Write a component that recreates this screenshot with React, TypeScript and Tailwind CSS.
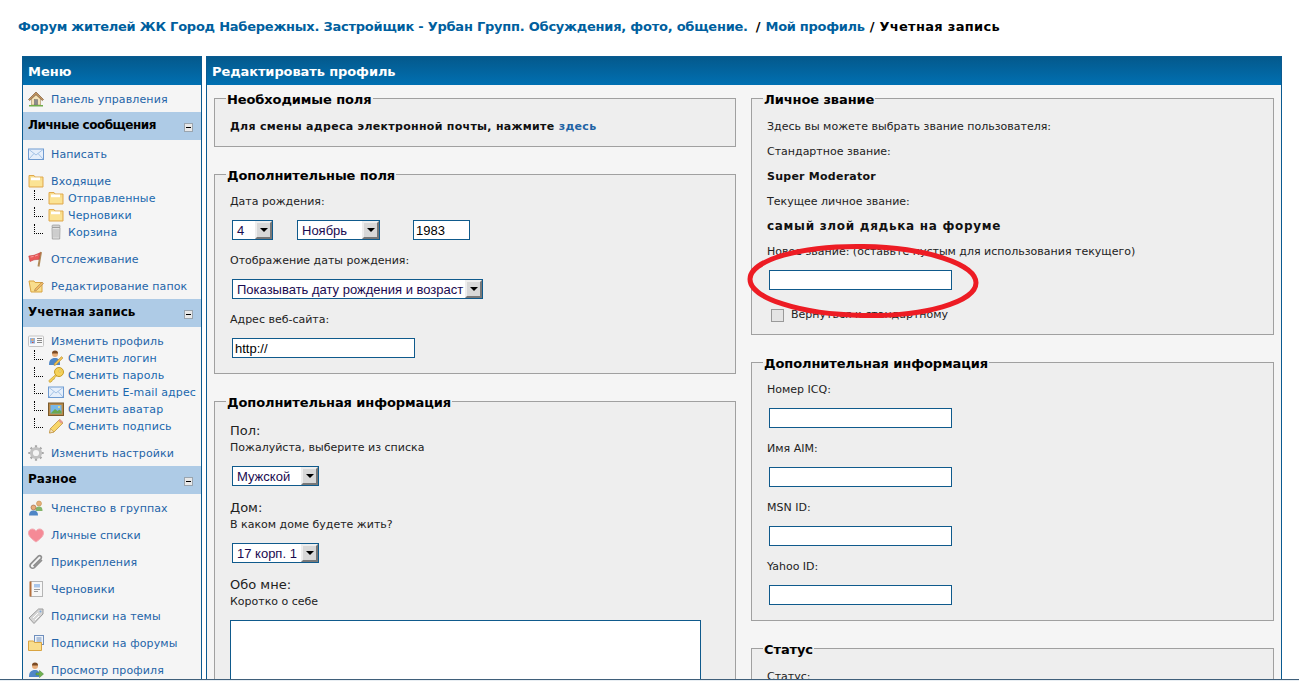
import type { ReactNode } from "react";

type IconName =
  | "home" | "mail" | "folder" | "trash" | "flag" | "folderEdit" | "card" | "userEdit" | "key"
  | "picture" | "pencil" | "gear" | "group" | "heart" | "clip" | "notebook" | "tag" | "folderDocs" | "userGo";

function Icon({ name }: { name: IconName }) {
  const body: Record<IconName, ReactNode> = {
    home: (
      <>
        <path d="M3.5 7.5 8 3.8l4.500 3.700V14h-9z" fill="#f3e2b8" stroke="#a58a5c" strokeWidth=".6" />
        <path d="M.5 8.500 8 1l7.500 7.500-1.200 1L8 3.500 1.700 9.500z" fill="#c49560" stroke="#7b5a3a" strokeWidth=".7" />
        <rect x="6.300" y="8.500" width="3.400" height="5.500" fill="#8c8c8c" stroke="#666" strokeWidth=".4" />
        <path d="M1 14h14v1.500H1z" fill="#6fae4a" />
      </>
    ),
    mail: (
      <>
        <rect x=".5" y="3" width="15" height="10.500" fill="#e6effb" stroke="#6f9bd1" />
        <path d="m1 3.500 7 5.500 7-5.500M1 13l5-5.500M15 13l-5-5.500" fill="none" stroke="#a3c2e6" />
      </>
    ),
    folder: (
      <>
        <path d="M1 2.500h5l1 1.500h8v10H1z" fill="#f9dd8c" stroke="#e0a94e" />
        <path d="M3 4.500h9v3H3z" fill="#fff" />
        <path d="M2 7.500h12V13H2z" fill="#fbe394" />
      </>
    ),
    trash: (
      <>
        <rect x="4" y="1" width="8" height="2.500" rx="1" fill="#d2d2d2" stroke="#8c8c8c" strokeWidth=".6" />
        <path d="M4 3.500h8l-.3 11.500H4.300z" fill="#e2e2e2" stroke="#8c8c8c" strokeWidth=".7" />
        <path d="M6 5v8.500M8 5v8.500M10 5v8.500" stroke="#a6a6a6" strokeWidth=".7" />
      </>
    ),
    flag: (
      <>
        <path d="M13 1 10.500 15.500" stroke="#b08a58" strokeWidth="2" />
        <path d="M.8 5 6 4.300l6.200-2.500-1.200 6.500-5 .5L2 10.500z" fill="#ea5a5a" stroke="#c43a3a" strokeWidth=".6" />
        <path d="m2.500 6 3-.5M7 5l3-1" stroke="#f9b0b0" strokeWidth=".8" />
      </>
    ),
    folderEdit: (
      <>
        <path d="M1 3h5l1 1.500h7V14H3z" fill="#f9dd8c" stroke="#d9a441" />
        <path d="m7 11 7-7 1.500 1.500-7 7-2 .5z" fill="#f0b860" stroke="#a9814f" strokeWidth=".6" />
      </>
    ),
    card: (
      <>
        <rect x=".5" y="3" width="15" height="10.500" rx="1" fill="#f9f9f9" stroke="#c4c4c4" />
        <rect x="2" y="5" width="5" height="5.500" fill="#8db4e2" />
        <circle cx="4.500" cy="6.800" r="1.300" fill="#e7a76c" />
        <path d="M4 9.500h1.500" stroke="#d0453a" />
        <path d="M9 5.500h5M9 7.500h5M9 9.500h5" stroke="#8a8a8a" />
      </>
    ),
    userEdit: (
      <>
        <circle cx="7" cy="4" r="3" fill="#e7ad7a" />
        <path d="M4 3.500a3 3 0 0 1 6 0z" fill="#7a4a24" />
        <path d="M1 15c0-5 2-7 6-7s5 2 5 7z" fill="#4f86c6" />
        <path d="m6.500 13.500 7-7 1.500 1.500-7 7-2 .5z" fill="#f0c050" stroke="#b08a30" strokeWidth=".5" />
      </>
    ),
    key: (
      <>
        <path d="M8.300 7 .8 13.700l1 1.800 2.200-1.300.6-1.600 1.600-.4.4-1.600 3.500-2.800z" fill="#f5d25a" stroke="#c79a28" strokeWidth=".7" />
        <circle cx="11" cy="5" r="4.500" fill="#f5d25a" stroke="#c79a28" />
        <circle cx="12" cy="4" r="1.100" fill="#fff6c8" stroke="#c79a28" strokeWidth=".5" />
      </>
    ),
    picture: (
      <>
        <rect x=".5" y="2" width="15" height="12.500" fill="#b98a4a" stroke="#7a5a2c" />
        <rect x="2.500" y="4" width="11" height="8.500" fill="#78b7e8" />
        <path d="M2.500 12.500 7 8l2.500 2 2-1.500 2 2v2z" fill="#6aa84f" />
        <circle cx="11" cy="6" r="1" fill="#f6e27a" />
      </>
    ),
    pencil: (
      <>
        <path d="m1.500 15 1-4.500L11.500 1.500l3.500 3.500-9 9z" fill="#f8d66a" stroke="#b8862e" strokeWidth=".7" />
        <path d="m1.500 15 1-4.500 3.500 3.500z" fill="#f2dfb9" stroke="#b8862e" strokeWidth=".5" />
        <path d="m10.300 2.700 3 3 1.700-1.700-3-3z" fill="#e59a8e" />
      </>
    ),
    gear: (
      <>
        <path d="M8 .3v3.400M8 12.300v3.400M.3 8h3.400M12.300 8h3.400M2.600 2.600l2.400 2.400M11 11l2.400 2.400M2.600 13.400 5 11M11 5l2.400-2.400" stroke="#a8a8a8" strokeWidth="2.200" />
        <circle cx="8" cy="8" r="4.600" fill="none" stroke="#c2c2c2" strokeWidth="3" />
      </>
    ),
    group: (
      <>
        <circle cx="11" cy="3.500" r="2.500" fill="#e7ad7a" stroke="#b88a3c" strokeWidth=".5" />
        <path d="M7.500 11c0-3 1-4.500 3.500-4.500s3.500 1.500 3.500 4.500z" fill="#84b56a" />
        <circle cx="5.500" cy="7.500" r="2.500" fill="#e7ad7a" stroke="#8a4a24" strokeWidth=".5" />
        <path d="M1 15.500c0-3.500 1.500-5 4.500-5s4.500 1.500 4.500 5z" fill="#4f86c6" />
      </>
    ),
    heart: <path d="M8 15C3 11.500.5 9 .5 5.800.5 3.500 2.300 2 4.300 2 5.800 2 7.200 2.800 8 4.200 8.800 2.800 10.200 2 11.700 2c2 0 3.800 1.500 3.800 3.800C15.500 9 13 11.500 8 15z" fill="#f58a96" stroke="#f2aab2" />,
    clip: (
      <path d="m14 5-7.500 7.500a2.600 2.600 0 0 1-3.700-3.700l7.800-7.800a1.800 1.800 0 0 1 2.500 2.500L5.500 11.200" fill="none" stroke="#8f8f8f" strokeWidth="1.700" transform="translate(0 1)" />
    ),
    notebook: (
      <>
        <rect x="2.500" y=".5" width="12" height="15" fill="#f7f7f7" stroke="#b5b5b5" />
        <rect x="1.500" y=".5" width="2" height="15" fill="#b5703c" />
        <rect x="6" y="3" width="6" height="3.500" fill="#a9c6ea" />
        <path d="M6 8.500h6M6 10.500h4" stroke="#9a9a9a" />
      </>
    ),
    tag: (
      <>
        <path d="M1 10 10.500 1H15v5l-9 9.500z" fill="#d5d5d5" stroke="#9a9a9a" />
        <path d="m5 10 5-5M7 12l4-4" stroke="#fff" />
        <circle cx="12.500" cy="3.500" r="1" fill="#7fa8d8" />
      </>
    ),
    folderDocs: (
      <>
        <rect x="6.500" y=".5" width="9" height="9" fill="#eef3fa" stroke="#6f8fbd" />
        <path d="M8.500 3h5M8.500 5h5M8.500 7h5" stroke="#6f8fbd" />
        <path d="M.5 6h5l1 1.500h7v8H.5z" fill="#f9dd8c" stroke="#d9a441" />
      </>
    ),
    userGo: (
      <>
        <circle cx="7" cy="4" r="3" fill="#e7ad7a" />
        <path d="M4 3.500a3 3 0 0 1 6 0z" fill="#7a4a24" />
        <path d="M1 15c0-5 2-7 6-7 2 0 3 .5 4 2v5z" fill="#4f86c6" />
        <path d="M8 11h3.500V8.500L15.500 12l-4 3.500V13H8z" fill="#6fb04f" stroke="#3f7f2c" strokeWidth=".5" />
      </>
    ),
  };
  return (
    <svg viewBox="0 0 16 16" className="h-4 w-4 shrink-0">
      {body[name]}
    </svg>
  );
}

function MenuItem({ icon, label }: { icon: IconName; label: string }) {
  return (
    <li className="flex h-[17px] items-center">
      <span className="flex w-[23px] shrink-0"><Icon name={icon} /></span>
      <a className="whitespace-nowrap pt-[4px] tracking-[.12px] text-[#2464a8]">{label}</a>
    </li>
  );
}

function SubItem({ icon, label }: { icon: IconName; label: string }) {
  return (
    <li className="flex h-[17px] items-center">
      <span className="mb-[6px] ml-[6px] h-[10px] w-[9px] shrink-0 border-b border-l border-dotted border-b-black border-l-black" />
      <span className="ml-[5px] flex w-[20px] shrink-0"><Icon name={icon} /></span>
      <a className="whitespace-nowrap pt-[4px] tracking-[.12px] text-[#1a68ae]">{label}</a>
    </li>
  );
}

function Group({ children }: { children: ReactNode }) {
  return <ul className="px-[5px] py-[5px]">{children}</ul>;
}

function SectionHead({ title, tight }: { title: string; tight?: boolean }) {
  return (
    <div className="flex h-[28px] items-center justify-between bg-[#aecbe6] pl-[5px] pr-[8px]">
      <b className={tight ? "pb-[2px] text-[12px] tracking-[-.5px] text-black" : "pb-[2px] text-[12px] text-black"}>{title}</b>
      <span className="mt-[2px] flex h-[9px] w-[9px] items-center justify-center border border-[#9aa5af] bg-[#e8e8e8]">
        <span className="h-px w-[5px] bg-black" />
      </span>
    </div>
  );
}

function Sidebar() {
  return (
    <aside className="h-[700px] w-[180px] shrink-0 border-x border-t border-[#0a5a90] bg-[#f5f5f5] text-[11px]">
      <div className="flex h-[28px] items-center bg-gradient-to-b from-[#04598c] to-[#0070b2] pl-[5px] pt-[2px] text-[13px] font-bold text-white">Меню</div>
      <Group><MenuItem icon="home" label="Панель управления" /></Group>
      <SectionHead title="Личные сообщения" tight />
      <Group><MenuItem icon="mail" label="Написать" /></Group>
      <Group>
        <MenuItem icon="folder" label="Входящие" />
        <SubItem icon="folder" label="Отправленные" />
        <SubItem icon="folder" label="Черновики" />
        <SubItem icon="trash" label="Корзина" />
      </Group>
      <Group><MenuItem icon="flag" label="Отслеживание" /></Group>
      <Group><MenuItem icon="folderEdit" label="Редактирование папок" /></Group>
      <SectionHead title="Учетная запись" />
      <Group>
        <MenuItem icon="card" label="Изменить профиль" />
        <SubItem icon="userEdit" label="Сменить логин" />
        <SubItem icon="key" label="Сменить пароль" />
        <SubItem icon="mail" label="Сменить E-mail адрес" />
        <SubItem icon="picture" label="Сменить аватар" />
        <SubItem icon="pencil" label="Сменить подпись" />
      </Group>
      <Group><MenuItem icon="gear" label="Изменить настройки" /></Group>
      <SectionHead title="Разное" />
      <Group><MenuItem icon="group" label="Членство в группах" /></Group>
      <Group><MenuItem icon="heart" label="Личные списки" /></Group>
      <Group><MenuItem icon="clip" label="Прикрепления" /></Group>
      <Group><MenuItem icon="notebook" label="Черновики" /></Group>
      <Group><MenuItem icon="tag" label="Подписки на темы" /></Group>
      <Group><MenuItem icon="folderDocs" label="Подписки на форумы" /></Group>
      <Group><MenuItem icon="userGo" label="Просмотр профиля" /></Group>
    </aside>
  );
}

function Box({ title, className, children }: { title: string; className: string; children: ReactNode }) {
  return (
    <fieldset className={`border border-[#a0a0a0] bg-[#eeeeee] px-[15px] ${className}`}>
      <legend className="-ml-[4px] h-[15px] px-px pt-[2px] text-[13px] font-bold leading-[13px] tracking-[-.1px] text-black">{title}</legend>
      {children}
    </fieldset>
  );
}

function Label({ children }: { children: ReactNode }) {
  return <p className="flex h-[25px] items-center whitespace-nowrap text-[#222]">{children}</p>;
}

function Input({ value, w }: { value?: string; w: string }) {
  return (
    <input
      readOnly
      value={value ?? ""}
      className={`block h-5 border border-[#0f5a8c] bg-white pl-[2px] font-['Liberation_Sans',sans-serif] text-[13px] text-black outline-none ${w}`}
    />
  );
}

function Select({ value, w }: { value: string; w: string }) {
  return (
    <div className={`flex h-5 items-center justify-between border border-[#0f5a8c] bg-white pl-1 font-['Liberation_Sans',sans-serif] text-[13px] text-[#1a0a50] ${w}`}>
      <span className="whitespace-nowrap pt-px">{value}</span>
      <span className="flex h-[18px] w-[17px] shrink-0 items-center justify-center border-2 border-t-[#eeeeee] border-r-[#777] border-b-[#777] border-l-[#eeeeee] bg-[#d8d8d8]">
        <span className="h-0 w-0 border-x-[4px] border-t-[4px] border-x-transparent border-t-black" />
      </span>
    </div>
  );
}

function LeftColumn() {
  return (
    <div className="flex flex-col gap-[20px]">
      <Box title="Необходимые поля" className="h-[56px]">
        <p className="mt-[13px] whitespace-nowrap font-bold tracking-[.3px] text-[#111]">
          Для смены адреса электронной почты, нажмите <a className="text-[#1f63a5]">здесь</a>
        </p>
      </Box>
      <Box title="Дополнительные поля" className="h-[207px]">
        <div className="mt-[8px]"><Label>Дата рождения:</Label></div>
        <div className="ml-[2px] mt-[5px] flex">
          <Select value="4" w="w-[41px]" />
          <div className="w-[24px]" />
          <Select value="Ноябрь" w="w-[83px]" />
          <div className="w-[33px]" />
          <Input value="1983" w="w-[57px]" />
        </div>
        <div className="mt-[9px]"><Label>Отображение даты рождения:</Label></div>
        <div className="ml-[2px] mt-[5px]"><Select value="Показывать дату рождения и возраст" w="w-[251px]" /></div>
        <div className="mt-[9px]"><Label>Адрес веб-сайта:</Label></div>
        <div className="ml-[2px] mt-[5px]"><Input value="http://" w="w-[183px]" /></div>
      </Box>
      <Box title="Дополнительная информация" className="h-[400px]">
        <p className="mt-[13px] text-[13px] leading-[17px] text-[#222]">Пол:</p>
        <p className="leading-[17px] text-[#222]">Пожалуйста, выберите из списка</p>
        <div className="ml-[2px] mt-[10px]"><Select value="Мужской" w="w-[87px]" /></div>
        <p className="mt-[13px] text-[13px] leading-[17px] text-[#222]">Дом:</p>
        <p className="leading-[17px] text-[#222]">В каком доме будете жить?</p>
        <div className="ml-[2px] mt-[10px]"><Select value="17 корп. 1" w="w-[87px]" /></div>
        <p className="mt-[13px] text-[13px] leading-[17px] text-[#222]">Обо мне:</p>
        <p className="leading-[17px] text-[#222]">Коротко о себе</p>
        <div className="mt-[10px] h-[120px] w-[471px] border border-[#0f5a8c] bg-white" />
      </Box>
    </div>
  );
}

function RightColumn() {
  return (
    <div className="flex flex-col gap-[20px]">
      <Box title="Личное звание" className="h-[244px]">
        <div className="mt-[9px]">
          <Label>Здесь вы можете выбрать звание пользователя:</Label>
          <Label>Стандартное звание:</Label>
          <Label><b className="tracking-[.25px] text-[#111]">Super Moderator</b></Label>
          <Label>Текущее личное звание:</Label>
          <Label><b className="pb-[3px] text-[12px] tracking-[.7px] text-[#111]">самый злой дядька на форуме</b></Label>
          <Label>Новое звание: (оставьте пустым для использования текущего)</Label>
        </div>
        <div className="ml-[2px] mt-[5px]"><Input w="w-[183px]" /></div>
        <label className="ml-[4px] mt-[17px] flex items-center gap-[7px] text-[#222]">
          <span className="h-[13px] w-[13px] border border-[#999] bg-[#e4e4e4]" />
          Вернуться к стандартному
        </label>
      </Box>
      <Box title="Дополнительная информация" className="h-[266px]">
        <div className="mt-[8px]"><Label>Номер ICQ:</Label></div>
        <div className="ml-[2px] mt-[5px]"><Input w="w-[183px]" /></div>
        <div className="mt-[9px]"><Label>Имя AIM:</Label></div>
        <div className="ml-[2px] mt-[5px]"><Input w="w-[183px]" /></div>
        <div className="mt-[9px]"><Label>MSN ID:</Label></div>
        <div className="ml-[2px] mt-[5px]"><Input w="w-[183px]" /></div>
        <div className="mt-[9px]"><Label>Yahoo ID:</Label></div>
        <div className="ml-[2px] mt-[5px]"><Input w="w-[183px]" /></div>
      </Box>
      <Box title="Статус" className="h-[100px]">
        <div className="mt-[9px]"><Label>Статус:</Label></div>
      </Box>
    </div>
  );
}

export default function App() {
  return (
    <div className="relative flex h-[681px] w-full flex-col overflow-hidden bg-white font-['DejaVu_Sans',sans-serif] text-[11px]">
      <div className="h-[679px] overflow-hidden">
        <div className="flex h-[56px] items-center whitespace-nowrap pb-[3px] pl-[18px] text-[13px] font-bold text-black">
          <a className="tracking-[-.24px] text-[#005f9e]">Форум жителей ЖК Город Набережных. Застройщик - Урбан Групп. Обсуждения, фото, общение.</a>
          <span className="ml-[8px] mr-[5px]">/</span>
          <a className="tracking-[-.3px] text-[#005f9e]">Мой профиль</a>
          <span className="mx-[5px]">/</span>
          <span className="tracking-[.3px]">Учетная запись</span>
        </div>
        <div className="flex gap-[4px] pl-[22px]">
          <Sidebar />
          <main className="h-[700px] w-[1076px] border-x border-t border-[#0a5a90] bg-[#f5f5f5]">
            <div className="flex h-[28px] items-center bg-gradient-to-b from-[#04598c] to-[#0070b2] pl-[5px] pt-[2px] text-[13px] font-bold tracking-[-.1px] text-white">Редактировать профиль</div>
            <div className="grid grid-cols-[522px_523px] gap-[15px] px-[7px] pt-[6px]">
              <LeftColumn />
              <RightColumn />
            </div>
          </main>
        </div>
      </div>
      <div className="h-[2px] border-t border-[#3f5f7a] bg-[#e8eef3]" />
      <svg className="pointer-events-none absolute left-[745px] top-[243px]" width="236" height="78" viewBox="0 0 236 78">
        <ellipse cx="118" cy="38" rx="113" ry="34.500" fill="none" stroke="#ed1c24" strokeWidth="5" transform="rotate(1 118 38)" />
      </svg>
    </div>
  );
}
